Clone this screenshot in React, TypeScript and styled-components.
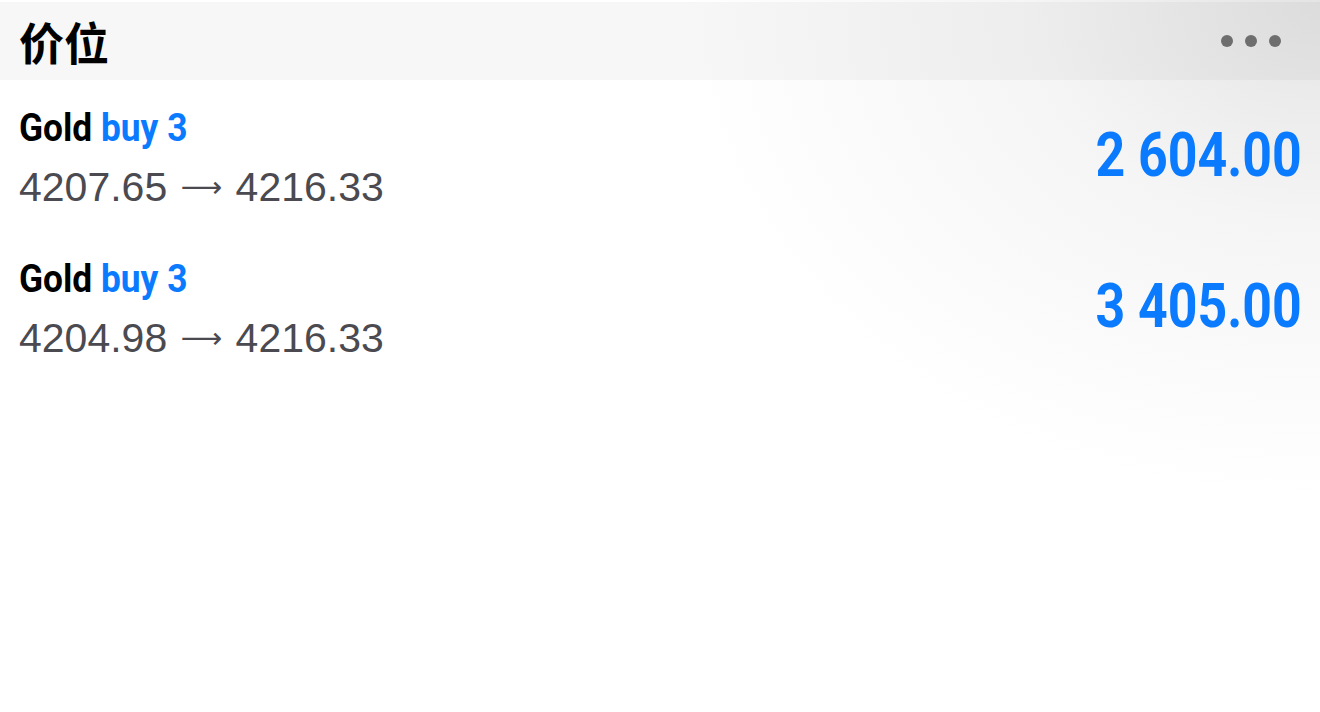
import styled, { createGlobalStyle } from "styled-components";

interface Position {
    id: number;
    symbol: string;
    side: string;
    volume: number;
    open: string;
    current: string;
    profit: string;
}

const positions: Position[] = [
    { id: 1, symbol: "Gold", side: "buy", volume: 3, open: "4207.65", current: "4216.33", profit: "2 604.00" },
    { id: 2, symbol: "Gold", side: "buy", volume: 3, open: "4204.98", current: "4216.33", profit: "3 405.00" },
];

function App() {
    return (
        <>
            <GlobalStyle />
            <Page>
                <Header>
                    <Title>价位</Title>
                    <MoreButton aria-label="more">
                        <Dot />
                        <Dot />
                        <Dot />
                    </MoreButton>
                </Header>
                <List>
                    {positions.map((p) => (
                        <Row key={p.id}>
                            <Info>
                                <Name>
                                    {p.symbol} <Side>{p.side} {p.volume}</Side>
                                </Name>
                                <Prices>
                                    {p.open} <Arrow>⟶</Arrow> {p.current}
                                </Prices>
                            </Info>
                            <Profit>{p.profit}</Profit>
                        </Row>
                    ))}
                </List>
            </Page>
        </>
    );
}

const GlobalStyle = createGlobalStyle`
    html, body {
        margin: 0;
        padding: 0;
        background: #fff;
    }
    * {
        box-sizing: border-box;
    }
`;

const Page = styled.div`
    width: 1320px;
    height: 712px;
    overflow: hidden;
    padding-top: 2px;
    background: radial-gradient(ellipse 640px 500px at 100% 0, #e4e4e4 0%, #f5f5f5 45%, #ffffff 100%);
`;

const Header = styled.header`
    height: 78px;
    display: flex;
    align-items: center;
    justify-content: space-between;
    padding: 0 39px 0 19px;
    background: rgba(0, 0, 0, 0.03);
`;

const Title = styled.h1`
    margin: 0;
    font-family: "Noto Sans CJK SC", "Noto Sans", sans-serif;
    font-weight: 700;
    font-size: 45px;
    line-height: 1;
    color: #000;
`;

const MoreButton = styled.button`
    display: flex;
    gap: 12px;
    padding: 0;
    border: none;
    background: none;
`;

const Dot = styled.span`
    width: 12px;
    height: 12px;
    border-radius: 50%;
    background: #6e6e6e;
`;

const List = styled.ul`
    list-style: none;
    margin: 0;
    padding: 0;
`;

const Row = styled.li`
    height: 151px;
    display: flex;
    align-items: center;
    justify-content: space-between;
    padding: 0 18px 0 19px;
`;

const Info = styled.div`
    display: flex;
    flex-direction: column;
    align-items: flex-start;
    padding-top: 8px;
`;

/* condensed face: Roboto bold narrowed */
const Name = styled.div`
    font-family: Roboto, "Noto Sans", sans-serif;
    font-weight: 700;
    font-size: 39px;
    line-height: 46px;
    color: #000;
    transform: scaleX(0.905);
    transform-origin: left center;
    white-space: nowrap;
`;

const Side = styled.span`
    color: #0a7aff;
`;

const Prices = styled.div`
    margin-top: 8px;
    font-family: "Liberation Sans", Arial, sans-serif;
    font-size: 41px;
    line-height: 56px;
    color: #4a4a50;
    white-space: nowrap;
`;

const Arrow = styled.span`
    font-family: "DejaVu Sans", sans-serif;
    font-size: 29px;
    vertical-align: 4px;
    margin: 0 2px 0 2px;
`;

const Profit = styled.div`
    font-family: Roboto, "Noto Sans", sans-serif;
    font-weight: 700;
    font-size: 61px;
    line-height: 1;
    color: #0a7aff;
    transform: scaleX(0.85);
    transform-origin: right center;
    white-space: nowrap;
`;

export default App;
